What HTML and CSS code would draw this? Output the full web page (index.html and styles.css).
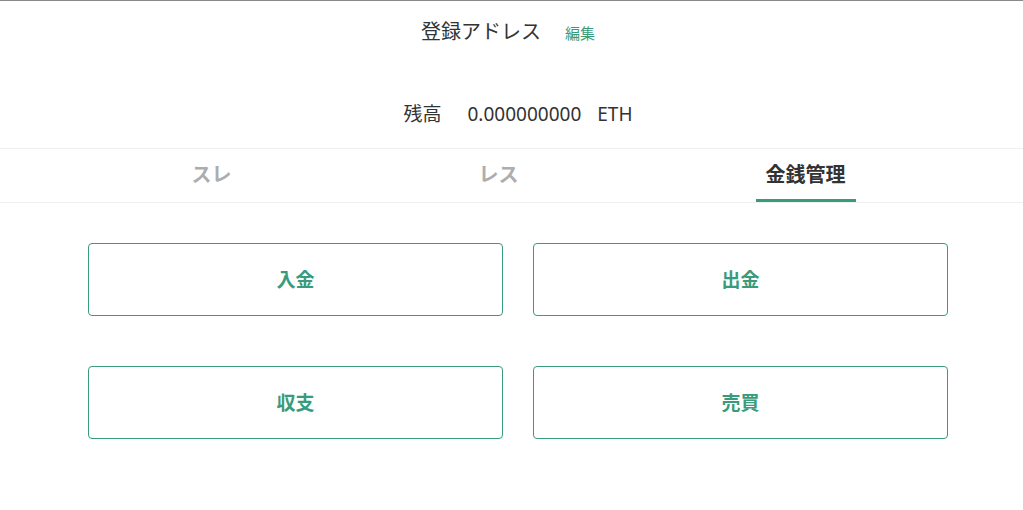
FILE: index.html
```html
<!DOCTYPE html>
<html lang="ja">
<head>
<meta charset="utf-8">
<title>金銭管理</title>
<link rel="stylesheet" href="styles.css">
</head>
<body>
<div class="page">
  <header class="profile">
    <div class="address-row">
      <span class="address-label">登録アドレス</span>
      <a class="edit-link" href="#">編集</a>
    </div>
    <div class="balance-row">
      <span class="balance-label">残高</span>
      <span class="balance-value">0.000000000</span>
      <span class="balance-unit">ETH</span>
    </div>
  </header>
  <nav class="tabs">
    <div class="tab"><span class="tab-label">スレ</span></div>
    <div class="tab"><span class="tab-label">レス</span></div>
    <div class="tab active"><span class="tab-label">金銭管理</span></div>
  </nav>
  <main class="actions">
    <button class="action-btn">入金</button>
    <button class="action-btn">出金</button>
    <button class="action-btn">収支</button>
    <button class="action-btn">売買</button>
  </main>
</div>
</body>
</html>
```

FILE: styles.css
```css
html, body {
  margin: 0;
  padding: 0;
  background: #fff;
}

body {
  font-family: "Noto Sans", "Noto Sans CJK JP", sans-serif;
  color: #333;
  border-top: 1px solid #8a8a8a;
}

.profile {
  display: flex;
  flex-direction: column;
  align-items: center;
  padding-top: 18px;
}

.address-row {
  display: flex;
  align-items: center;
  height: 26px;
  margin-left: -7px;
}

.address-label {
  font-size: 20px;
  line-height: 26px;
  color: #333;
}

.edit-link {
  margin-left: 24px;
  font-size: 15px;
  line-height: 26px;
  color: #3a9b7b;
  text-decoration: none;
  padding-top: 1px;
}

.balance-row {
  display: flex;
  align-items: center;
  height: 26px;
  margin-top: 56px;
  margin-left: 13px;
  font-size: 19px;
  line-height: 26px;
}

.balance-label {
  margin-right: 26px;
}

.balance-unit {
  margin-left: 16px;
}

.tabs {
  display: grid;
  grid-template-columns: 287fr 287fr 327fr;
  margin-top: 21px;
  padding: 0 54px 0 68px;
  border-top: 1px solid #efefef;
  border-bottom: 1px solid #efefef;
}

.tab {
  text-align: center;
}

.tab-label {
  display: inline-block;
  box-sizing: border-box;
  height: 53px;
  line-height: 52px;
  padding: 0 10px;
  font-size: 20px;
  font-weight: 700;
  color: #adadad;
  border-bottom: 3px solid transparent;
}

.tab.active .tab-label {
  color: #333;
  border-bottom-color: #3a9b7b;
}

.actions {
  display: grid;
  grid-template-columns: 1fr 1fr;
  column-gap: 30px;
  row-gap: 50px;
  margin: 40px 75px 0 88px;
}

.action-btn {
  height: 73px;
  border: 1px solid #3a9b7b;
  border-radius: 4px;
  background: #fff;
  color: #3a9b7b;
  font-family: "Noto Sans CJK JP", sans-serif;
  font-size: 19px;
  font-weight: 700;
  cursor: pointer;
  padding: 0 0 2px;
}
```
